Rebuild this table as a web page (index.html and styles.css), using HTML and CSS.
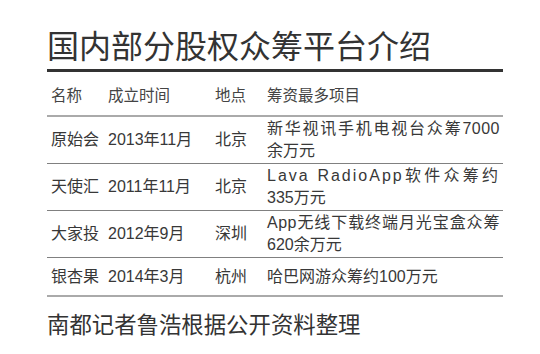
FILE: index.html
```html
<!DOCTYPE html>
<html lang="zh-CN">
<head>
    <meta charset="UTF-8">
    <meta name="viewport" content="width=device-width, initial-scale=1.0">
    <title>国内部分股权众筹平台介绍</title>
    <link rel="stylesheet" href="styles.css">
</head>
<body>
    <div id="crowd">
        <h1 class="title">国内部分股权众筹平台介绍</h1>
        <table class="list">
            <colgroup>
                <col class="c-name">
                <col class="c-date">
                <col class="c-city">
                <col class="c-item">
            </colgroup>
            <thead>
                <tr>
                    <th>名称</th>
                    <th>成立时间</th>
                    <th>地点</th>
                    <th>筹资最多项目</th>
                </tr>
            </thead>
            <tbody>
                <tr>
                    <td>原始会</td>
                    <td>2013年11月</td>
                    <td>北京</td>
                    <td class="item"><span class="ln">新华视讯手机电视台众筹7000</span><span>余万元</span></td>
                </tr>
                <tr>
                    <td>天使汇</td>
                    <td>2011年11月</td>
                    <td>北京</td>
                    <td class="item"><span class="ln wide">Lava RadioApp软件众筹约</span><span>335万元</span></td>
                </tr>
                <tr>
                    <td>大家投</td>
                    <td>2012年9月</td>
                    <td>深圳</td>
                    <td class="item"><span class="ln">App无线下载终端月光宝盒众筹</span><span>620余万元</span></td>
                </tr>
                <tr class="last">
                    <td>银杏果</td>
                    <td>2014年3月</td>
                    <td>杭州</td>
                    <td class="item">哈巴网游众筹约100万元</td>
                </tr>
            </tbody>
        </table>
        <p class="source">南都记者鲁浩根据公开资料整理</p>
    </div>
</body>
</html>
```

FILE: styles.css
```css
body{
    margin:0;
    background:#fff;
}
#crowd{
    width:456px;
    margin:0 0 0 47px;
    color:#383838;
    font-family:"Liberation Sans","Noto Sans CJK SC",sans-serif;
}
#crowd .title{
    margin:0;
    padding-top:22px;
    font-size:32px;
    font-weight:normal;
    line-height:44px;
    font-family:"Noto Sans CJK SC",sans-serif;
    color:#333;
}
#crowd .list{
    width:456px;
    margin-top:3px;
    border-collapse:collapse;
    table-layout:fixed;
    border-top:3px solid #333;
}
#crowd .c-name{width:61px;}
#crowd .c-date{width:107px;}
#crowd .c-city{width:52px;}
#crowd .c-item{width:236px;}
#crowd th{
    height:43px;
    padding:0;
    text-align:left;
    font-size:15.5px;
    font-weight:normal;
    color:#444;
    border-bottom:2px solid #aaa;
}
#crowd td{
    height:35px;
    padding:1px 0;
    font-size:16px;
    line-height:22px;
    border-bottom:1px solid #808080;
}
#crowd th:first-child,
#crowd td:first-child{padding-left:4px;}
#crowd .item{padding-right:3px;}
#crowd .item span{display:block;}
#crowd .item .ln{
    letter-spacing:0.5px;
    text-align:justify;
    text-align-last:justify;
}
#crowd .item .wide{letter-spacing:2px;}
#crowd .last td{border-bottom:2px solid #aaa;}
#crowd .source{
    margin:10px 0 0;
    font-size:22.4px;
    color:#333;
    font-family:"Noto Sans CJK SC",sans-serif;
}
```
